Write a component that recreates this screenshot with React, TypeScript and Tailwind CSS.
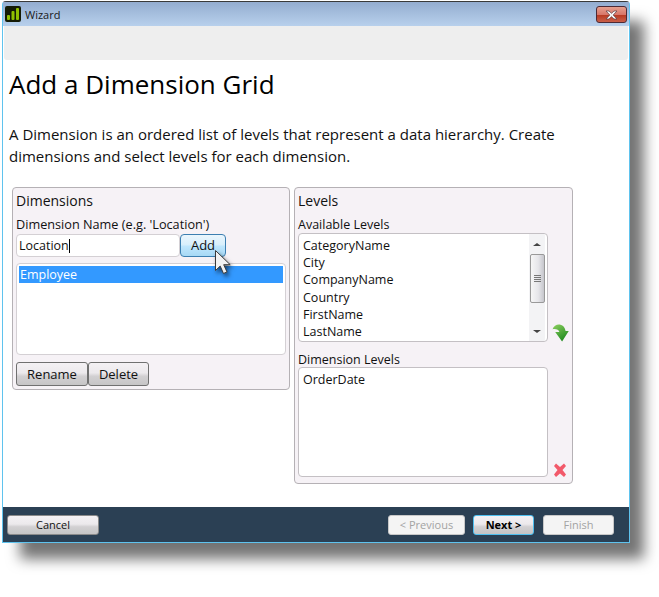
const listItems = ["CategoryName", "City", "CompanyName", "Country", "FirstName", "LastName"];

function AppIcon() {
  return (
    <svg width="16" height="16" viewBox="0 0 16 16" className="shrink-0">
      <rect x="0" y="0" width="16" height="16" rx="2" fill="#141a05" />
      <rect x="2" y="9" width="3" height="5" rx="1" fill="#8fbf00" />
      <rect x="6.5" y="5" width="3" height="9" rx="1" fill="#8fbf00" />
      <rect x="11" y="2" width="3" height="12" rx="1" fill="#8fbf00" />
    </svg>
  );
}

function CloseButton() {
  return (
    <div className="w-[31px] h-[17px] mt-[4px] rounded-[3px] border border-[#4d2a35] bg-[linear-gradient(#e6a08e_0%,#d8776a_50%,#b83a22_55%,#c9604a_100%)] flex items-center justify-center">
      <svg width="13" height="10" viewBox="0 0 13 10">
        <path d="M1 1h3l2.500 2.300L9 1h3L8.200 5 12 9H9L6.500 6.700 4 9H1l3.800-4z" fill="#f4f4f4" stroke="#5a3a40" strokeWidth="0.7" />
      </svg>
    </div>
  );
}

function GrayButton({ label, className }: { label: string; className: string }) {
  return (
    <button className={`rounded-[3px] border border-[#707070] bg-[linear-gradient(#f4f1f4_0%,#ece9ec_45%,#d2d0d2_60%,#c6c5c6_100%)] leading-none text-[#111] ${className}`}>
      {label}
    </button>
  );
}

function FooterDisabled({ label, className }: { label: string; className: string }) {
  return (
    <button className={`h-[20px] rounded-[3px] border border-[#c8c8c8] bg-[#f4f4f4] text-[11px] font-medium leading-none text-[#a3a3a3] ${className}`}>
      {label}
    </button>
  );
}

function Cursor() {
  return (
    <svg width="22" height="30" viewBox="0 0 22 30" className="absolute left-[211px] top-[249px] drop-shadow-[2px_3px_2px_rgba(0,0,0,0.55)]">
      <path d="M4.500 1.500v20l4.700-4.400 3.300 7.400 3.500-1.600-3.300-7.200h6.500z" fill="#f2f2f2" stroke="#3a3a3a" strokeWidth="1" strokeLinejoin="round" />
    </svg>
  );
}

function Scrollbar() {
  return (
    <div className="w-[16px] h-full flex flex-col items-center bg-[#f3f3f5]">
      <div className="h-[20px] w-full flex items-center justify-center shrink-0">
        <div className="w-0 h-0 border-x-[4px] border-x-transparent border-b-[3px] border-b-[#444]" />
      </div>
      <div className="h-[49px] w-[15px] shrink-0 rounded-[2px] border border-[#999] bg-[linear-gradient(90deg,#f6f6f6,#e6e6ea_55%,#c6c6cc)] flex flex-col items-center justify-center gap-[1px]">
        <div className="w-[7px] h-[1px] bg-[#777]" />
        <div className="w-[7px] h-[1px] bg-[#777]" />
        <div className="w-[7px] h-[1px] bg-[#777]" />
        <div className="w-[7px] h-[1px] bg-[#777]" />
      </div>
      <div className="flex-1" />
      <div className="h-[20px] w-full flex items-center justify-center shrink-0">
        <div className="w-0 h-0 border-x-[4px] border-x-transparent border-t-[3px] border-t-[#444]" />
      </div>
    </div>
  );
}

function GreenArrow() {
  return (
    <svg width="17" height="18" viewBox="0 0 16 17" className="shrink-0">
      <defs>
        <linearGradient id="g" x1="0" y1="0" x2="0.6" y2="1">
          <stop offset="0" stopColor="#8fd060" />
          <stop offset="1" stopColor="#1f8a1f" />
        </linearGradient>
      </defs>
      <path d="M0.500 5C1.500 1.500 5 0 8 0.700c2.500.6 4.300 2.800 4.800 5.800H15.800L9.500 16.500 3 7.500h4C6.500 5.500 3.500 4.300 0.500 5z" fill="url(#g)" />
    </svg>
  );
}

function RedX() {
  return (
    <svg width="14" height="14" viewBox="0 0 14 14" className="shrink-0">
      <path d="M1 3l2-2.500 4 3.500 4-3.500 2 2.500-3.500 4 3.500 4.500L11 14 7 10.500 3 14l-2-2.500L4.500 7z" fill="#f2596a" />
    </svg>
  );
}

export default function App() {
  return (
    <div className="relative w-[659px] h-[597px] bg-white overflow-hidden pl-[2px] pt-[1px] font-['Open_Sans','Noto_Sans',sans-serif] text-[#111]">
      <div className="w-[628px] h-[542px] flex flex-col rounded-t-[4px] border-t border-t-[#3a3a3a] border-x border-x-[#5fc3ee] border-b border-b-[#5fc3ee] shadow-[16px_18px_14px_-2px_rgba(0,0,0,0.55)] bg-white">
        {/* title bar */}
        <div className="h-[24px] shrink-0 flex justify-between pl-[2px] pr-[2px] bg-[linear-gradient(#94add0,#b8d0ec)]">
          <div className="flex items-center gap-[4px]">
            <AppIcon />
            <span className="text-[11px] leading-none text-[#1a1a1a]">Wizard</span>
          </div>
          <CloseButton />
        </div>
        {/* gray band */}
        <div className="h-[34px] shrink-0 bg-[#eeeeee] rounded-b-[3px] mx-[1px]" />
        {/* content */}
        <div className="flex-1 flex flex-col pl-[6px]">
          <h1 className="mt-[6px] h-[36px] text-[26px] leading-[36px] text-black">Add a Dimension Grid</h1>
          <p className="mt-[21px] w-[610px] h-[44px] text-[15px] leading-[22px] text-[#111]">
            A Dimension is an ordered list of levels that represent a data hierarchy. Create dimensions and select levels for each dimension.
          </p>
          <div className="mt-[20px] ml-[3px] flex items-start gap-[4px]">
            {/* Dimensions */}
            <div className="w-[278px] h-[203px] rounded-[4px] border border-[#b5b1b5] bg-[#f6f2f6] px-[3px] flex flex-col">
              <div className="mt-[3px] h-[20px] text-[14px] leading-[20px]">Dimensions</div>
              <div className="mt-[4px] h-[17px] text-[12.7px] leading-[18px]">Dimension Name (e.g. 'Location')</div>
              <div className="mt-[2px] flex items-start">
                <div className="w-[164px] h-[23px] rounded-[4px] border border-[#d4d0d4] bg-white pl-[2px] text-[12.5px] leading-[21px] flex items-center">
                  <span>Location</span>
                  <span className="w-[1px] h-[14px] bg-black" />
                </div>
                <button className="w-[46px] h-[23px] rounded-[4px] border border-[#3c7fb1] bg-[linear-gradient(#eaf6fd_0%,#d9f0fc_45%,#bee6fd_55%,#a7d9f5_100%)] text-[13px] leading-none text-[#111]">
                  Add
                </button>
              </div>
              <div className="mt-[6px] h-[92px] rounded-[4px] border border-[#d4d0d4] bg-white p-[2px]">
                <div className="h-[17px] bg-[#3399ff] pl-[1px] text-[12.5px] leading-[18px] text-white">Employee</div>
              </div>
              <div className="mt-[7px] flex">
                <GrayButton label="Rename" className="w-[72px] h-[24px] text-[13px]" />
                <GrayButton label="Delete" className="w-[61px] h-[24px] text-[13px]" />
              </div>
            </div>
            {/* Levels */}
            <div className="w-[279px] h-[297px] rounded-[4px] border border-[#b5b1b5] bg-[#f6f2f6] pl-[3px] flex flex-col">
              <div className="mt-[3px] h-[20px] text-[14px] leading-[20px]">Levels</div>
              <div className="mt-[4px] h-[17px] text-[12.5px] leading-[19px]">Available Levels</div>
              <div className="mt-[1px] flex items-end gap-[4px]">
                <div className="w-[250px] h-[109px] rounded-[4px] border border-[#c4c0c4] bg-white pl-[4px] pr-[2px] flex justify-between overflow-hidden">
                  <div className="pt-[3px] text-[12.5px] leading-[17.2px]">
                    {listItems.map((t) => (
                      <div key={t}>{t}</div>
                    ))}
                  </div>
                  <Scrollbar />
                </div>
                <GreenArrow />
              </div>
              <div className="mt-[9px] h-[16px] text-[12.5px] leading-[17px]">Dimension Levels</div>
              <div className="flex items-end gap-[5px]">
                <div className="w-[250px] h-[110px] rounded-[4px] border border-[#c4c0c4] bg-white pl-[4px] pt-[3px] text-[12.5px] leading-[17px]">OrderDate</div>
                <RedX />
              </div>
            </div>
          </div>
        </div>
        {/* footer */}
        <div className="h-[35px] shrink-0 bg-[#2b4054] flex items-center pl-[4px] pr-[15px]">
          <GrayButton label="Cancel" className="w-[92px] h-[20px] text-[11px] font-medium !border-[#8a8a8a]" />
          <div className="flex-1" />
          <FooterDisabled label="< Previous" className="w-[77px]" />
          <button className="ml-[8px] w-[61px] h-[20px] rounded-[3px] border border-[#4fc0f0] bg-[linear-gradient(#f4f1f4_0%,#ece9ec_45%,#d2d0d2_60%,#c6c5c6_100%)] text-[11px] font-bold leading-none text-black">
            {"Next >"}
          </button>
          <FooterDisabled label="Finish" className="ml-[9px] w-[71px]" />
        </div>
      </div>
      <Cursor />
    </div>
  );
}
